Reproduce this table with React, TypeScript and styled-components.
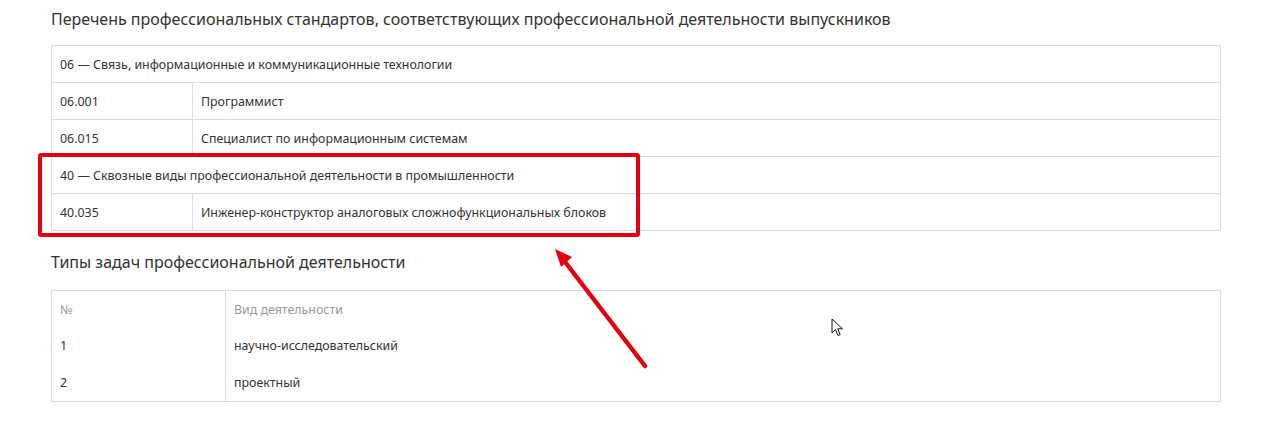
import styled, { createGlobalStyle } from "styled-components"

const GlobalStyle = createGlobalStyle`
  body {
    margin: 0;
    background: #fff;
    font-family: "Noto Sans", "Open Sans", sans-serif;
    color: #333;
  }
`

type Standard = { code: string; title: string; group?: boolean }

const standards: Standard[] = [
  { code: "06 — Связь, информационные и коммуникационные технологии", title: "", group: true },
  { code: "06.001", title: "Программист" },
  { code: "06.015", title: "Специалист по информационным системам" },
  { code: "40 — Сквозные виды профессиональной деятельности в промышленности", title: "", group: true },
  { code: "40.035", title: "Инженер-конструктор аналоговых сложнофункциональных блоков" },
]

const tasks = [
  { n: "1", kind: "научно-исследовательский" },
  { n: "2", kind: "проектный" },
]

const App = () => {
  return (
    <Page>
      <GlobalStyle />
      <Heading $gap={12}>Перечень профессиональных стандартов, соответствующих профессиональной деятельности выпускников</Heading>
      <Table>
        <colgroup>
          <col style={{ width: 141 }} />
          <col />
        </colgroup>
        <tbody>
          {standards.map((s) =>
            s.group ? (
              <Row key={s.code}>
                <Cell colSpan={2}>{s.code}</Cell>
              </Row>
            ) : (
              <Row key={s.code}>
                <Cell>{s.code}</Cell>
                <Cell>{s.title}</Cell>
              </Row>
            )
          )}
        </tbody>
      </Table>
      <Heading $gap={14}>Типы задач профессиональной деятельности</Heading>
      <Table>
        <colgroup>
          <col style={{ width: 174 }} />
          <col />
        </colgroup>
        <thead>
          <Row>
            <HeadCell>№</HeadCell>
            <HeadCell>Вид деятельности</HeadCell>
          </Row>
        </thead>
        <tbody>
          {tasks.map((t) => (
            <Row key={t.n} $plain>
              <Cell>{t.n}</Cell>
              <Cell>{t.kind}</Cell>
            </Row>
          ))}
        </tbody>
      </Table>
      <Heading $gap={14}>Д</Heading>

      <Highlight />
      <Arrow width="100" height="125" viewBox="0 0 100 125">
        <line x1="95" y1="120" x2="12" y2="12" stroke="#e3000f" strokeWidth="4.5" strokeLinecap="round" />
        <polygon points="5,3 22,11 11,21" fill="#e3000f" />
      </Arrow>
      <Cursor width="14" height="20" viewBox="0 0 14 20">
        <path d="M1 1 L1 15 L4.5 11.5 L7 17.5 L9.2 16.6 L6.8 10.8 L11.5 10.8 Z" fill="#fff" stroke="#111" strokeWidth="1" strokeLinejoin="round" />
      </Cursor>
    </Page>
  )
}

export default App

const Page = styled.div`
  position: relative;
  width: 1170px;
  padding: 5px 0 0 51px;
  height: 420px;
  overflow: hidden;
`

const Heading = styled.h3<{ $gap: number }>`
  margin: 0 0 ${(p) => p.$gap}px;
  font-size: 16px;
  font-weight: 400;
  line-height: 28px;
  color: #333;
`

const Table = styled.table`
  width: 1170px;
  border-collapse: collapse;
  border: 1px solid #ddd;
  margin-bottom: 17px;
  table-layout: fixed;
`

const Row = styled.tr<{ $plain?: boolean }>`
  border-top: ${(p) => (p.$plain ? "none" : "1px solid #ddd")};
  & > td,
  & > th {
    height: ${(p) => (p.$plain ? "36px" : "35px")};
  }
`

const Cell = styled.td`
  padding: 1px 8px 0;
  font-size: 12.4px;
  line-height: 18px;
  color: #333;
  border-left: 1px solid #ddd;
  vertical-align: middle;
`

const HeadCell = styled(Cell).attrs({ as: "th" })`
  text-align: left;
  font-weight: 400;
  color: #999;
`

const Highlight = styled.div`
  position: absolute;
  left: 38px;
  top: 153px;
  width: 594px;
  height: 76px;
  border: 4px solid #e3000f;
  border-radius: 3px;
  pointer-events: none;
`

const Arrow = styled.svg`
  position: absolute;
  left: 550px;
  top: 246px;
`

const Cursor = styled.svg`
  position: absolute;
  left: 831px;
  top: 318px;
`
